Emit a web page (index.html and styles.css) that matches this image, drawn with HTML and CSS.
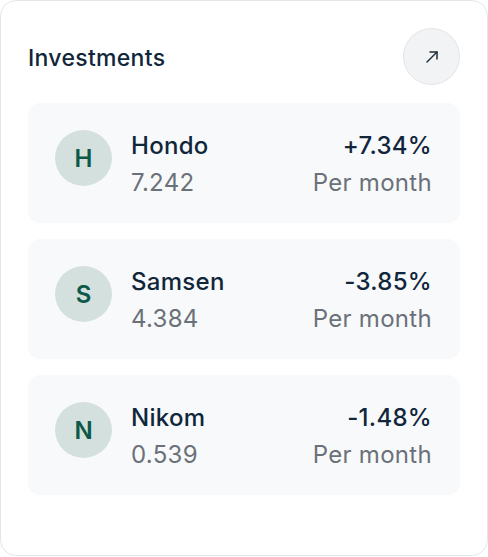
FILE: index.html
```html
<!DOCTYPE html>
<html>
<head>
<meta charset="utf-8">
<link rel="stylesheet" href="styles.css">
</head>
<body>
<div class="card">
  <div class="header">
    <h2 class="title">Investments</h2>
    <button class="open-btn" aria-label="Open">
      <svg width="16" height="16" viewBox="0 0 16 16" fill="none" stroke="#1f2d3a" stroke-width="1.5" stroke-linecap="round" stroke-linejoin="round">
        <path d="M3 13 L13 3"/>
        <path d="M6 3 H13 V10"/>
      </svg>
    </button>
  </div>
  <div class="list">
    <div class="row">
      <div class="avatar">H</div>
      <div class="info">
        <div class="name">Hondo</div>
        <div class="sub">7.242</div>
      </div>
      <div class="stats">
        <div class="pct">+7.34%</div>
        <div class="sub">Per month</div>
      </div>
    </div>
    <div class="row">
      <div class="avatar">S</div>
      <div class="info">
        <div class="name">Samsen</div>
        <div class="sub">4.384</div>
      </div>
      <div class="stats">
        <div class="pct">-3.85%</div>
        <div class="sub">Per month</div>
      </div>
    </div>
    <div class="row">
      <div class="avatar">N</div>
      <div class="info">
        <div class="name">Nikom</div>
        <div class="sub">0.539</div>
      </div>
      <div class="stats">
        <div class="pct">-1.48%</div>
        <div class="sub">Per month</div>
      </div>
    </div>
  </div>
</div>
</body>
</html>
```

FILE: styles.css
```css
* { box-sizing: border-box; }
html, body { margin: 0; padding: 0; background: #ffffff; }
body { font-family: Inter, "Noto Sans", sans-serif; }

.card {
  width: 488px;
  height: 556px;
  border: 1px solid #e3e5e9;
  border-radius: 16px;
  padding: 27px;
  background: #ffffff;
}

.header {
  display: flex;
  align-items: center;
  justify-content: space-between;
  height: 56px;
  margin-bottom: 19px;
}

.title {
  margin: 3px 0 0;
  font-size: 23px;
  font-weight: 500;
  letter-spacing: 0.3px;
  color: #10263a;
}

.open-btn {
  width: 57px;
  height: 57px;
  border-radius: 50%;
  border: 1px solid #e2e4e8;
  background: #f2f3f5;
  display: flex;
  align-items: center;
  justify-content: center;
  padding: 0;
  margin-top: 1px;
}

.list {
  display: flex;
  flex-direction: column;
  gap: 16px;
}

.row {
  height: 120px;
  background: #f8f9fb;
  border-radius: 12px;
  padding: 28px 28px 26px 27px;
  display: flex;
  align-items: flex-start;
}

.avatar {
  width: 57px;
  height: 56px;
  margin-top: -1px;
  border-radius: 50%;
  background: #d3e0de;
  color: #0c5849;
  font-size: 24px;
  font-weight: 600;
  display: flex;
  align-items: center;
  justify-content: center;
  flex-shrink: 0;
}

.info {
  margin-left: 19px;
  flex: 1;
  display: flex;
  flex-direction: column;
  gap: 8px;
}

.stats {
  display: flex;
  flex-direction: column;
  align-items: flex-end;
  gap: 8px;
}

.name, .pct, .sub {
  font-size: 24px;
  line-height: 29px;
  letter-spacing: 0.3px;
}

.name {
  color: #10263a;
  font-weight: 500;
}

.pct {
  color: #10263a;
  font-weight: 500;
}

.sub {
  color: #6b7178;
  font-weight: 400;
}
```
